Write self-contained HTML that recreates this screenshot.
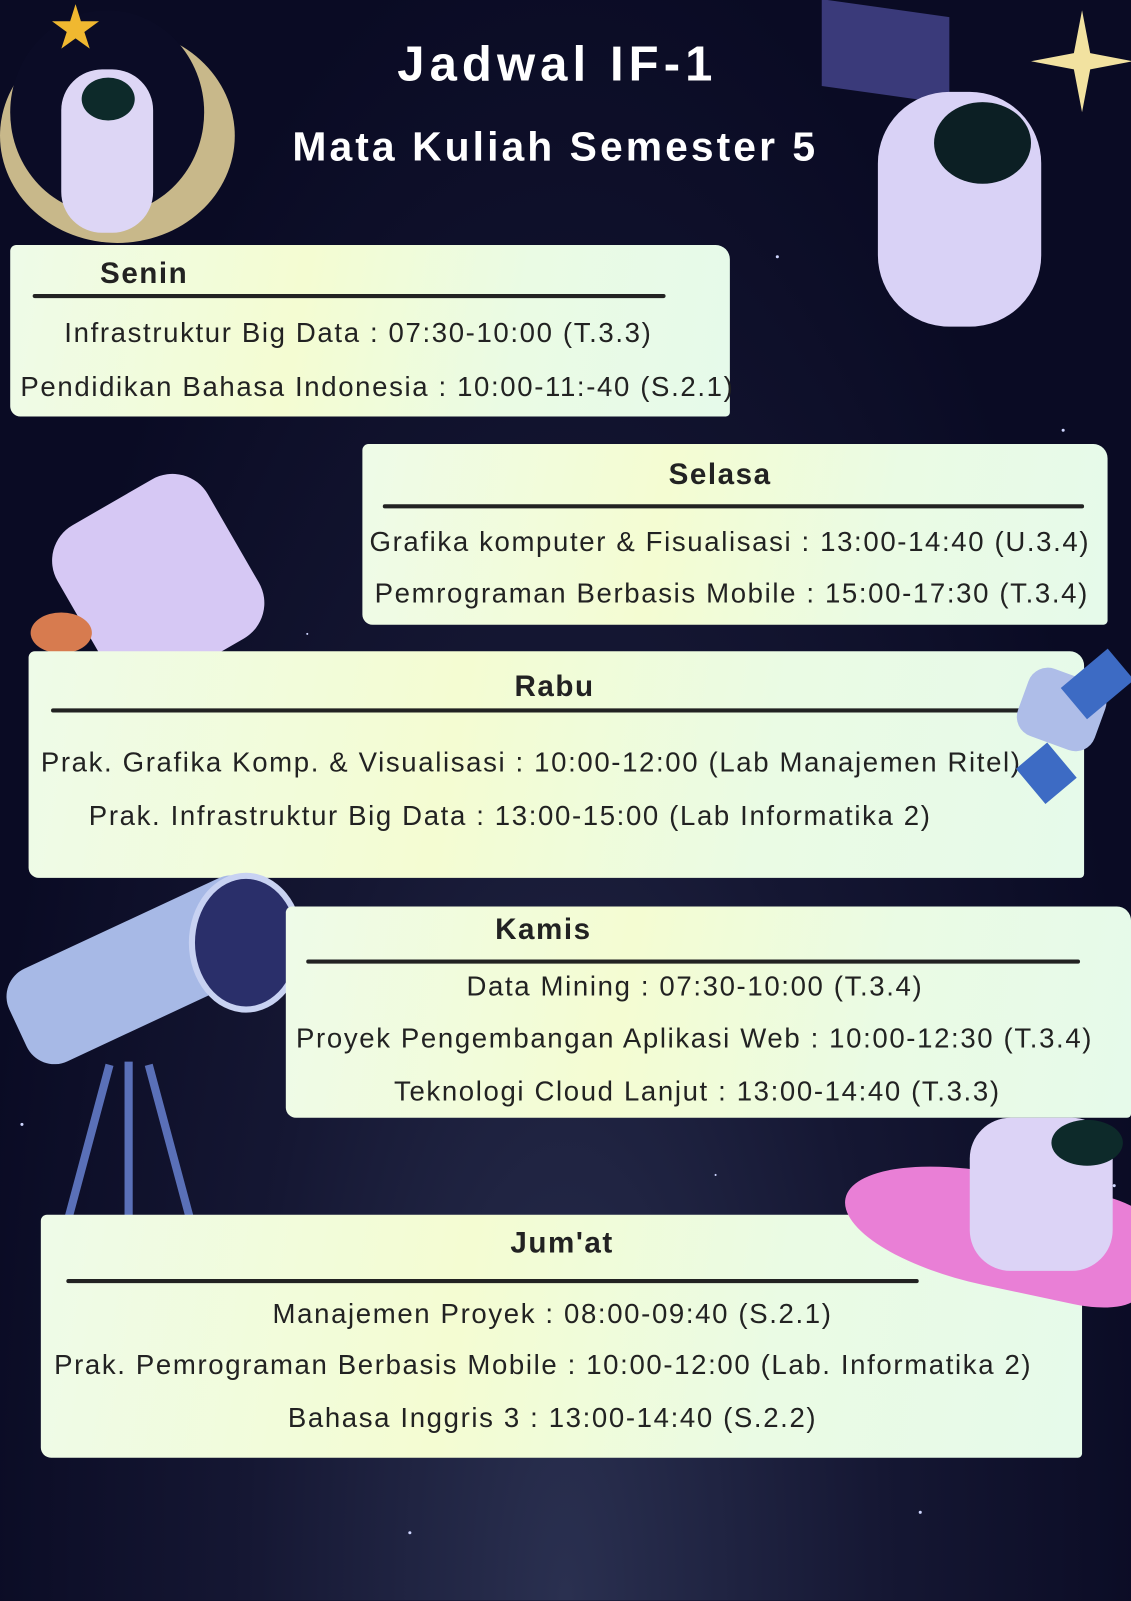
<!DOCTYPE html>
<html><head><meta charset="utf-8"><style>
html,body{margin:0;padding:0;background:#0b0c26;}
#w{width:1108px;height:1568px;position:relative;overflow:hidden;transform:scale(1.0208);transform-origin:0 0;
background:radial-gradient(ellipse at 50% 100%,#2a3050 0%,#151733 40%,#0a0b24 75%);font-family:"Liberation Sans",sans-serif;}
.t{position:absolute;left:0;width:1108px;text-align:center;color:#fff;font-weight:bold;}
.box{position:absolute;background:linear-gradient(100deg,#eefbe8 0%,#f4fcd2 40%,#eafbe4 70%,#e6faea 100%);border-radius:6px 14px 4px 10px;}
.h{position:absolute;font-weight:bold;font-size:29px;color:#222;letter-spacing:1.5px;}
.ln{position:absolute;height:4px;background:#222;border-radius:2px;}
.r{position:absolute;font-size:27px;letter-spacing:1.6px;color:#222;white-space:nowrap;}
.st{position:absolute;border-radius:50%;background:#cfd6ff;}
</style></head><body><div id="w">
<div class="st" style="left:200px;top:300px;width:3px;height:3px"></div>
<div class="st" style="left:760px;top:250px;width:3px;height:3px"></div>
<div class="st" style="left:1040px;top:420px;width:3px;height:3px"></div>
<div class="st" style="left:300px;top:620px;width:2px;height:2px"></div>
<div class="st" style="left:1090px;top:1160px;width:3px;height:3px"></div>
<div class="st" style="left:400px;top:1500px;width:3px;height:3px"></div>
<div class="st" style="left:700px;top:1150px;width:2px;height:2px"></div>
<div class="st" style="left:900px;top:1480px;width:3px;height:3px"></div>
<div class="st" style="left:20px;top:1100px;width:3px;height:3px"></div>

<div class="t" style="top:36px;font-size:48px;letter-spacing:5px;left:-8px">Jadwal IF-1</div>
<div class="t" style="top:122px;font-size:40px;letter-spacing:3px;left:-10px">Mata Kuliah Semester 5</div>

<div style="position:absolute;left:0;top:28px;width:230px;height:210px;border-radius:50%;background:#c8b88a;"></div>
<div style="position:absolute;left:10px;top:10px;width:190px;height:200px;border-radius:50%;background:#0b0c26;"></div>
<div style="position:absolute;left:60px;top:68px;width:90px;height:160px;border-radius:40px;background:#ddd6f5;"></div>
<div style="position:absolute;left:80px;top:76px;width:52px;height:42px;border-radius:50%;background:#0d2a2a;"></div>
<div style="position:absolute;left:50px;top:4px;width:48px;height:48px;background:#f0b830;clip-path:polygon(50% 0,61% 35%,98% 35%,68% 57%,79% 91%,50% 70%,21% 91%,32% 57%,2% 35%,39% 35%);"></div>
<div style="position:absolute;left:805px;top:8px;width:125px;height:85px;background:#3a3a7a;transform:skewY(8deg);"></div>
<div style="position:absolute;left:860px;top:90px;width:160px;height:230px;border-radius:70px;background:#d9d2f6;"></div>
<div style="position:absolute;left:915px;top:100px;width:95px;height:80px;border-radius:50%;background:#0c1f24;"></div>
<div style="position:absolute;left:1010px;top:10px;width:100px;height:100px;background:#f2e2a0;clip-path:polygon(50% 0,58% 42%,100% 50%,58% 58%,50% 100%,42% 58%,0 50%,42% 42%);"></div>

<div class="box" style="left:10px;top:240px;width:705px;height:168px"></div>
<div class="h" style="left:98px;top:252px">Senin</div>
<div class="ln" style="left:32px;top:288px;width:620px"></div>
<div class="r" style="left:63px;top:311px">Infrastruktur Big Data : 07:30-10:00 (T.3.3)</div>
<div class="r" style="left:20px;top:364px">Pendidikan Bahasa Indonesia : 10:00-11:-40 (S.2.1)</div>

<div style="position:absolute;left:70px;top:480px;width:170px;height:180px;border-radius:40px;background:#d6c8f4;transform:rotate(-30deg);"></div>
<div style="position:absolute;left:30px;top:600px;width:60px;height:40px;border-radius:50%;background:#d77b4f;"></div>

<div class="box" style="left:355px;top:435px;width:730px;height:177px"></div>
<div class="h" style="left:655px;top:449px">Selasa</div>
<div class="ln" style="left:375px;top:494px;width:687px"></div>
<div class="r" style="left:362px;top:516px">Grafika komputer &amp; Fisualisasi : 13:00-14:40 (U.3.4)</div>
<div class="r" style="left:367px;top:566px">Pemrograman Berbasis Mobile : 15:00-17:30 (T.3.4)</div>

<div class="box" style="left:28px;top:638px;width:1034px;height:222px"></div>
<div class="h" style="left:504px;top:657px">Rabu</div>
<div class="ln" style="left:50px;top:694px;width:950px"></div>
<div class="r" style="left:40px;top:732px">Prak. Grafika Komp. &amp; Visualisasi : 10:00-12:00 (Lab Manajemen Ritel)</div>
<div class="r" style="left:87px;top:784px">Prak. Infrastruktur Big Data : 13:00-15:00 (Lab Informatika 2)</div>
<div style="position:absolute;left:1000px;top:660px;width:80px;height:70px;border-radius:20px;background:#aebde8;transform:rotate(20deg);"></div>
<div style="position:absolute;left:1045px;top:650px;width:60px;height:40px;background:#3d6bc4;transform:rotate(-40deg);"></div>
<div style="position:absolute;left:1005px;top:735px;width:40px;height:45px;background:#3d6bc4;transform:rotate(-40deg);"></div>

<div style="position:absolute;left:5px;top:900px;width:270px;height:100px;border-radius:30px;background:#a7b9e6;transform:rotate(-25deg);"></div>
<div style="position:absolute;left:185px;top:855px;width:100px;height:125px;border-radius:50%;background:#2a2f6a;border:6px solid #c8d2f2;"></div>
<div style="position:absolute;left:80px;top:1040px;width:8px;height:180px;background:#5a70b8;transform:rotate(15deg);"></div>
<div style="position:absolute;left:165px;top:1040px;width:8px;height:180px;background:#5a70b8;transform:rotate(-15deg);"></div>
<div style="position:absolute;left:122px;top:1040px;width:8px;height:185px;background:#5a70b8;"></div>

<div class="box" style="left:280px;top:888px;width:828px;height:207px"></div>
<div class="h" style="left:485px;top:895px">Kamis</div>
<div class="ln" style="left:300px;top:940px;width:758px"></div>
<div class="r" style="left:457px;top:951px">Data Mining : 07:30-10:00 (T.3.4)</div>
<div class="r" style="left:290px;top:1002px">Proyek Pengembangan Aplikasi Web : 10:00-12:30 (T.3.4)</div>
<div class="r" style="left:386px;top:1054px">Teknologi Cloud Lanjut : 13:00-14:40 (T.3.3)</div>

<div class="box" style="left:40px;top:1190px;width:1020px;height:238px"></div>
<div class="h" style="left:500px;top:1202px">Jum'at</div>
<div class="ln" style="left:65px;top:1253px;width:835px"></div>
<div class="r" style="left:267px;top:1272px">Manajemen Proyek : 08:00-09:40 (S.2.1)</div>
<div class="r" style="left:53px;top:1322px">Prak. Pemrograman Berbasis Mobile : 10:00-12:00 (Lab. Informatika 2)</div>
<div class="r" style="left:282px;top:1374px">Bahasa Inggris 3 : 13:00-14:40 (S.2.2)</div>
<div style="position:absolute;left:825px;top:1150px;width:300px;height:110px;border-radius:50% 20% 20% 50%;background:#e97fd6;transform:rotate(12deg);"></div>
<div style="position:absolute;left:950px;top:1095px;width:140px;height:150px;border-radius:40px;background:#dcd3f6;"></div>
<div style="position:absolute;left:1030px;top:1097px;width:70px;height:45px;border-radius:50%;background:#0d2a2a;"></div>
</div></body></html>
